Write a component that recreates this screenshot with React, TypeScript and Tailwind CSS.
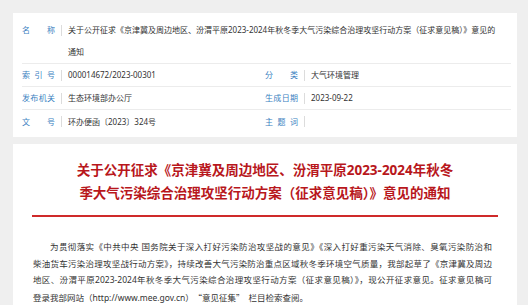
import { Fragment } from "react";

const LEFT_ROWS = [
  { label: ["索", "引", "号"], value: "000014672/2023-00301" },
  { label: ["发", "布", "机", "关"], value: "生态环境部办公厅" },
  { label: ["文", "号"], value: "环办便函〔2023〕324号" },
];

const RIGHT_ROWS = [
  { label: ["分", "类"], value: "大气环境管理" },
  { label: ["生", "成", "日", "期"], value: "2023-09-22" },
  { label: ["主", "题", "词"], value: "" },
];

const BODY_LINES = [
  "为贯彻落实《中共中央 国务院关于深入打好污染防治攻坚战的意见》《深入打好重污染天气消除、臭氧污染防治和",
  "柴油货车污染治理攻坚战行动方案》，持续改善大气污染防治重点区域秋冬季环境空气质量，我部起草了《京津冀及周边",
  "地区、汾渭平原2023-2024年秋冬季大气污染综合治理攻坚行动方案（征求意见稿）》，现公开征求意见。征求意见稿可",
];

function Label({ chars }: { chars: string[] }) {
  return (
    <div className="flex w-[33px] shrink-0 justify-between text-[#3b7fbf]">
      {chars.map((c, i) => (
        <span key={i}>{c}</span>
      ))}
    </div>
  );
}

function Sep() {
  return <div className="mx-[6px] h-[11px] w-px shrink-0 bg-[#dcdcdc]" />;
}

export default function App() {
  return (
    <div className="h-[305px] w-[528px] overflow-hidden bg-[#efefef] pt-[13px] font-['Noto_Sans','Noto_Sans_CJK_SC',sans-serif]">
      {/* 信息表 */}
      <div className="ml-[13px] w-[504px] bg-white pb-[4px] pl-[9px] pr-[6px] pt-[6px] text-[8px] leading-[22px] text-[#333]">
        <div className="flex border-b border-[#ececec]">
          <div className="flex h-[22px] shrink-0 items-center">
            <Label chars={["名", "称"]} />
            <Sep />
          </div>
          <div className="min-w-0 flex-1 whitespace-nowrap">
            关于公开征求《京津冀及周边地区、汾渭平原2023-2024年秋冬季大气污染综合治理攻坚行动方案（征求意见稿）》意见的
            <br />
            通知
          </div>
        </div>
        {LEFT_ROWS.map((row, i) => (
          <div
            key={i}
            className={`flex h-[23px] items-center ${i < 2 ? "border-b border-[#ececec]" : ""}`}
          >
            <div className="flex w-[243px] items-center">
              <Label chars={row.label} />
              <Sep />
              <span>{row.value}</span>
            </div>
            <div className="flex items-center">
              <Label chars={RIGHT_ROWS[i].label} />
              <Sep />
              <span>{RIGHT_ROWS[i].value}</span>
            </div>
          </div>
        ))}
      </div>

      {/* 正文 */}
      <div className="ml-[13px] mt-[7px] h-[200px] w-[504px] bg-white px-[19px] pt-[15px]">
        <h1 className="text-center text-[13.5px] font-bold leading-[23px] text-[#b8171c]">
          关于公开征求《京津冀及周边地区、汾渭平原2023-2024年秋冬
          <br />
          季大气污染综合治理攻坚行动方案（征求意见稿）》意见的通知
        </h1>
        <div className="mt-[10px] h-[2px] bg-[#cf2a2a]" />
        <div className="ml-[1px] mt-[22px] w-[459px] text-[8.5px] leading-[16.5px] text-[#333]">
          {BODY_LINES.map((line, i) => (
            <div
              key={i}
              className={`[text-align-last:justify] ${i === 0 ? "pl-[17px]" : ""}`}
            >
              {line}
            </div>
          ))}
          <div>
            登录我部网站（http://www.mee.gov.cn）
            <span className="ml-[4px] mr-[4px] font-['Noto_Sans_CJK_SC',sans-serif]">
              {"\u201C"}意见征集{"\u201D"}
            </span>
            栏目检索查阅。
          </div>
        </div>
      </div>
    </div>
  );
}
